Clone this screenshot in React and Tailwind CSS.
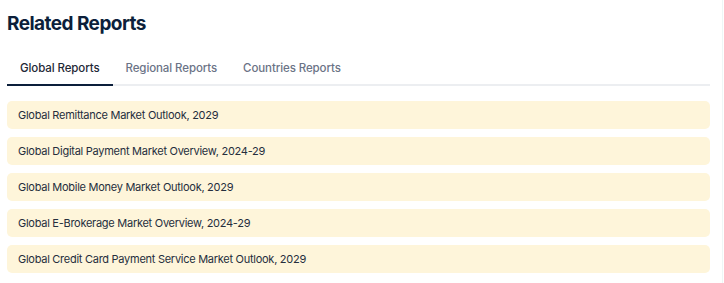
import React, { useState } from "react";

const tabs = ["Global Reports", "Regional Reports", "Countries Reports"];

const reports = [
  "Global Remittance Market Outlook, 2029",
  "Global Digital Payment Market Overview, 2024-29",
  "Global Mobile Money Market Outlook, 2029",
  "Global E-Brokerage Market Overview, 2024-29",
  "Global Credit Card Payment Service Market Outlook, 2029",
];

const App = () => {
  const [active, setActive] = useState(0);

  return (
    <div
      className="w-[723px] h-[283px] bg-white border-r border-[#eef6f6]"
      style={{ fontFamily: "Inter, 'Noto Sans', sans-serif" }}
    >
      <div className="w-[703px] ml-[7px] pt-[10px]">
        <h2 className="text-[19px] leading-[28px] font-bold tracking-[-0.55px] text-[#0c1f3b]">
          Related Reports
        </h2>

        {/* Tabs */}
        <div className="mt-[22px] flex border-b-2 border-[#eceef1]">
          {tabs.map((tab, i) => (
            <button
              key={tab}
              onClick={() => setActive(i)}
              className={`px-[13px] pb-[8px] -mb-[2px] border-b-2 text-[11.5px] leading-[16px] font-medium tracking-[-0.1px] ${
                active === i
                  ? "border-[#0c1f3b] text-[#1f2937]"
                  : "border-transparent text-[#6b7386]"
              }`}
            >
              {tab}
            </button>
          ))}
        </div>

        {/* Report list */}
        <div className="mt-[15px] flex flex-col gap-[8px]">
          {reports.map((r) => (
            <div
              key={r}
              className="h-[28px] flex items-center px-[11px] rounded-[5px] bg-[#fef5da] text-[11px] tracking-[-0.27px] text-[#252e3d]"
            >
              {r}
            </div>
          ))}
        </div>
      </div>
    </div>
  );
};

export default App;
